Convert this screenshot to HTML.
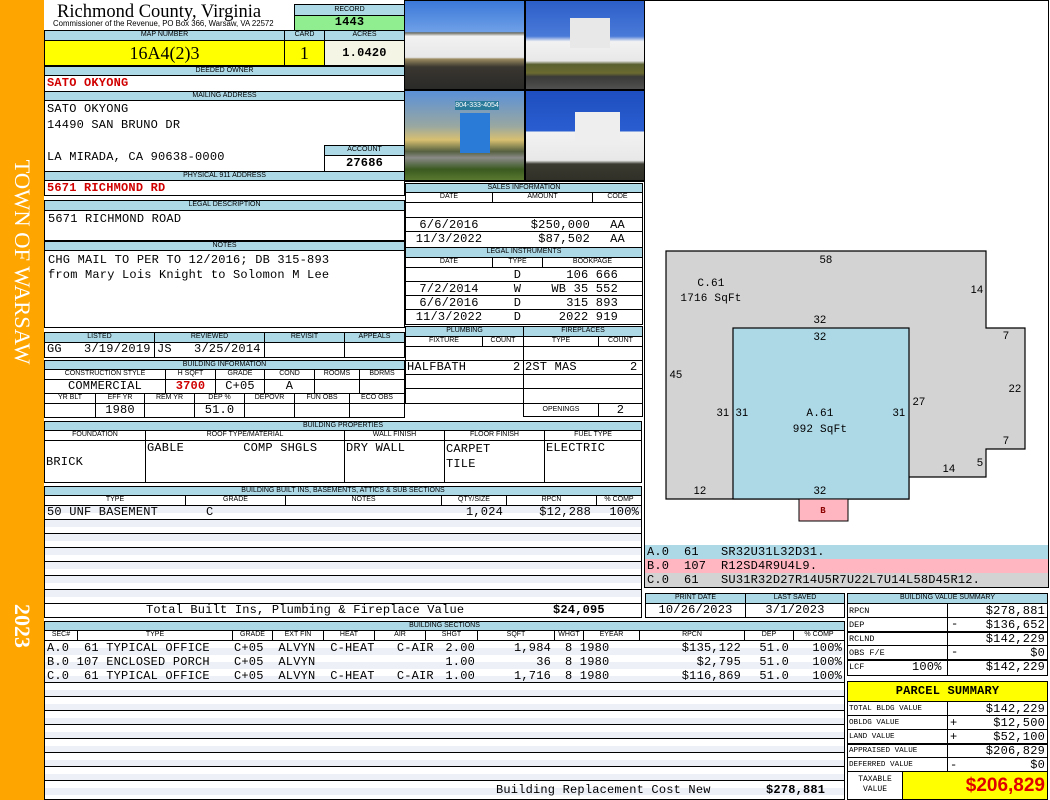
<!DOCTYPE html>
<html><head><meta charset="utf-8">
<style>
*{margin:0;padding:0;box-sizing:border-box}
body{width:1050px;height:800px;position:relative;background:#fff;overflow:hidden;font-family:"Liberation Mono",monospace;font-size:12px;letter-spacing:0.2px;color:#000}
div{position:absolute}
.b{border:1px solid #000;background:#fff}
.h{border:1px solid #000;background:#add8e6;font-family:"Liberation Sans",sans-serif;font-size:7px;letter-spacing:0;text-align:center;line-height:8px;overflow:hidden;white-space:nowrap}
.t{white-space:pre;line-height:13px}
.r{text-align:right}
.c{text-align:center}
.red{color:#d00000;font-weight:bold}
.s{font-family:"Liberation Sans",sans-serif;font-size:11px}
</style></head><body>
<!-- sidebar -->
<div style="left:0;top:0;width:44px;height:800px;background:#ffa500"></div>
<div style="left:22px;top:262px;width:0;height:0"><div style="left:-130px;top:-13px;width:260px;height:26px;transform:rotate(90deg);color:#fff;font-family:'Liberation Serif',serif;font-size:22.5px;letter-spacing:0;text-align:center;line-height:26px;white-space:nowrap">TOWN OF WARSAW</div></div>
<div style="left:22px;top:626px;width:0;height:0"><div style="left:-40px;top:-13px;width:80px;height:26px;transform:rotate(90deg);color:#fff;font-family:'Liberation Serif',serif;font-size:22px;letter-spacing:0;font-weight:bold;text-align:center;line-height:26px">2023</div></div>

<!-- header -->
<div style="left:57px;top:1px;font-family:'Liberation Serif',serif;font-size:18.5px;letter-spacing:0;line-height:22px;white-space:nowrap">Richmond County, Virginia</div>
<div style="left:53px;top:19px;font-family:'Liberation Sans',sans-serif;font-size:7.8px;letter-spacing:0;white-space:nowrap">Commissioner of the Revenue, PO Box 366, Warsaw, VA 22572</div>
<div class="h" style="left:294px;top:4px;width:111px;height:12px;line-height:10px">RECORD</div>
<div class="b t c" style="left:294px;top:15px;width:111px;height:16px;background:#90ee90;font-weight:bold">1443</div>
<div class="h" style="left:44px;top:30px;width:241px;height:11px">MAP NUMBER</div>
<div class="h" style="left:284px;top:30px;width:41px;height:11px">CARD</div>
<div class="h" style="left:324px;top:30px;width:81px;height:11px">ACRES</div>
<div class="b c" style="left:44px;top:40px;width:241px;height:26px;background:#ffff00;font-family:'Liberation Serif',serif;font-size:18px;letter-spacing:0;line-height:24px">16A4(2)3</div>
<div class="b c" style="left:284px;top:40px;width:41px;height:26px;background:#ffff00;font-family:'Liberation Serif',serif;font-size:18px;line-height:24px">1</div>
<div class="b c" style="left:324px;top:40px;width:81px;height:26px;background:#f5f5e6;font-weight:bold;line-height:24px">1.0420</div>

<div class="h" style="left:44px;top:66px;width:361px;height:10px">DEEDED OWNER</div>
<div class="b t red" style="left:44px;top:75px;width:361px;height:17px;padding-left:2px;line-height:15px">SATO OKYONG</div>
<div class="h" style="left:44px;top:91px;width:361px;height:10px">MAILING ADDRESS</div>
<div class="b" style="left:44px;top:100px;width:361px;height:72px"></div>
<div class="t" style="left:47px;top:101px;line-height:16px">SATO OKYONG
14490 SAN BRUNO DR

LA MIRADA, CA 90638-0000</div>
<div class="h" style="left:324px;top:145px;width:81px;height:11px">ACCOUNT</div>
<div class="b t c" style="left:324px;top:155px;width:81px;height:17px;font-weight:bold;line-height:15px">27686</div>
<div class="h" style="left:44px;top:171px;width:361px;height:10px">PHYSICAL 911 ADDRESS</div>
<div class="b t red" style="left:44px;top:180px;width:361px;height:16px;padding-left:2px;line-height:14px">5671 RICHMOND RD</div>

<div class="h" style="left:44px;top:200px;width:361px;height:11px">LEGAL DESCRIPTION</div>
<div class="b t" style="left:44px;top:210px;width:361px;height:31px;padding:2px 3px">5671 RICHMOND ROAD</div>
<div class="h" style="left:44px;top:241px;width:361px;height:10px">NOTES</div>
<div class="b t" style="left:44px;top:250px;width:361px;height:78px;padding:2px 3px;line-height:15px">CHG MAIL TO PER TO 12/2016; DB 315-893
from Mary Lois Knight to Solomon M Lee</div>

<div class="h" style="left:44px;top:332px;width:111px;height:11px">LISTED</div>
<div class="h" style="left:154px;top:332px;width:111px;height:11px">REVIEWED</div>
<div class="h" style="left:264px;top:332px;width:81px;height:11px">REVISIT</div>
<div class="h" style="left:344px;top:332px;width:61px;height:11px">APPEALS</div>
<div class="b t" style="left:44px;top:342px;width:111px;height:16px;padding-left:2px">GG   3/19/2019</div>
<div class="b t" style="left:154px;top:342px;width:111px;height:16px;padding-left:2px">JS   3/25/2014</div>
<div class="b" style="left:264px;top:342px;width:81px;height:16px"></div>
<div class="b" style="left:344px;top:342px;width:61px;height:16px"></div>

<div class="h" style="left:44px;top:360px;width:361px;height:10px">BUILDING INFORMATION</div>
<div class="h" style="left:44px;top:369px;width:122px;height:11px;background:#fff">CONSTRUCTION STYLE</div>
<div class="h" style="left:165px;top:369px;width:51px;height:11px;background:#fff">H SQFT</div>
<div class="h" style="left:215px;top:369px;width:50px;height:11px;background:#fff">GRADE</div>
<div class="h" style="left:264px;top:369px;width:51px;height:11px;background:#fff">COND</div>
<div class="h" style="left:314px;top:369px;width:46px;height:11px;background:#fff">ROOMS</div>
<div class="h" style="left:359px;top:369px;width:46px;height:11px;background:#fff">BDRMS</div>
<div class="b t c" style="left:44px;top:379px;width:122px;height:15px">COMMERCIAL</div>
<div class="b t c red" style="left:165px;top:379px;width:51px;height:15px">3700</div>
<div class="b t c" style="left:215px;top:379px;width:50px;height:15px">C+05</div>
<div class="b t c" style="left:264px;top:379px;width:51px;height:15px">A</div>
<div class="b" style="left:314px;top:379px;width:46px;height:15px"></div>
<div class="b" style="left:359px;top:379px;width:46px;height:15px"></div>
<div class="h" style="left:44px;top:393px;width:52px;height:11px;background:#fff">YR BLT</div>
<div class="h" style="left:95px;top:393px;width:50px;height:11px;background:#fff">EFF YR</div>
<div class="h" style="left:144px;top:393px;width:51px;height:11px;background:#fff">REM YR</div>
<div class="h" style="left:194px;top:393px;width:51px;height:11px;background:#fff">DEP %</div>
<div class="h" style="left:244px;top:393px;width:51px;height:11px;background:#fff">DEPOVR</div>
<div class="h" style="left:294px;top:393px;width:56px;height:11px;background:#fff">FUN OBS</div>
<div class="h" style="left:349px;top:393px;width:56px;height:11px;background:#fff">ECO OBS</div>
<div class="b" style="left:44px;top:403px;width:52px;height:15px"></div>
<div class="b t c" style="left:95px;top:403px;width:50px;height:15px">1980</div>
<div class="b" style="left:144px;top:403px;width:51px;height:15px"></div>
<div class="b t c" style="left:194px;top:403px;width:51px;height:15px">51.0</div>
<div class="b" style="left:244px;top:403px;width:51px;height:15px"></div>
<div class="b" style="left:294px;top:403px;width:56px;height:15px"></div>
<div class="b" style="left:349px;top:403px;width:56px;height:15px"></div>

<!-- building properties -->
<div class="h" style="left:44px;top:421px;width:598px;height:10px">BUILDING PROPERTIES</div>
<div class="h" style="left:44px;top:430px;width:102px;height:11px;background:#fff">FOUNDATION</div>
<div class="h" style="left:145px;top:430px;width:200px;height:11px;background:#fff">ROOF TYPE/MATERIAL</div>
<div class="h" style="left:344px;top:430px;width:101px;height:11px;background:#fff">WALL FINISH</div>
<div class="h" style="left:444px;top:430px;width:101px;height:11px;background:#fff">FLOOR FINISH</div>
<div class="h" style="left:544px;top:430px;width:98px;height:11px;background:#fff">FUEL TYPE</div>
<div class="b t" style="left:44px;top:440px;width:102px;height:43px;padding:15px 1px 0">BRICK</div>
<div class="b t" style="left:145px;top:440px;width:200px;height:43px;padding:1px">GABLE        COMP SHGLS</div>
<div class="b t" style="left:344px;top:440px;width:101px;height:43px;padding:1px">DRY WALL</div>
<div class="b t" style="left:444px;top:440px;width:101px;height:43px;padding:1px;line-height:15px">CARPET
TILE</div>
<div class="b t" style="left:544px;top:440px;width:98px;height:43px;padding:1px">ELECTRIC</div>

<!-- built ins -->
<div class="h" style="left:44px;top:486px;width:598px;height:10px">BUILDING BUILT INS, BASEMENTS, ATTICS &amp; SUB SECTIONS</div>
<div class="h" style="left:44px;top:495px;width:142px;height:11px;background:#fff">TYPE</div>
<div class="h" style="left:185px;top:495px;width:101px;height:11px;background:#fff">GRADE</div>
<div class="h" style="left:285px;top:495px;width:157px;height:11px;background:#fff">NOTES</div>
<div class="h" style="left:441px;top:495px;width:66px;height:11px;background:#fff">QTY/SIZE</div>
<div class="h" style="left:506px;top:495px;width:91px;height:11px;background:#fff">RPCN</div>
<div class="h" style="left:596px;top:495px;width:46px;height:11px;background:#fff">% COMP</div>
<div class="b" style="left:44px;top:505px;width:598px;height:99px;background:repeating-linear-gradient(#eef0f8 0 7px,#fff 7px 14px)"></div>
<div style="left:44px;top:519px;width:598px;border-top:1px solid #000"></div>
<div style="left:44px;top:533px;width:598px;border-top:1px solid #000"></div>
<div style="left:44px;top:547px;width:598px;border-top:1px solid #000"></div>
<div style="left:44px;top:561px;width:598px;border-top:1px solid #000"></div>
<div style="left:44px;top:575px;width:598px;border-top:1px solid #000"></div>
<div style="left:44px;top:589px;width:598px;border-top:1px solid #000"></div>
<div class="t" style="left:47px;top:506px">50 UNF BASEMENT</div>
<div class="t" style="left:206px;top:506px">C</div>
<div class="t r" style="left:441px;top:506px;width:62px">1,024</div>
<div class="t r" style="left:506px;top:506px;width:85px">$12,288</div>
<div class="t r" style="left:596px;top:506px;width:43px">100%</div>
<div class="b t" style="left:44px;top:603px;width:598px;height:15px"></div>
<div class="t" style="left:146px;top:604px">Total Built Ins, Plumbing &amp; Fireplace Value</div>
<div class="t" style="left:553px;top:604px;font-weight:bold">$24,095</div>

<!-- building sections -->
<div class="h" style="left:44px;top:621px;width:801px;height:10px">BUILDING SECTIONS</div>
<div class="h" style="left:44px;top:630px;width:34px;height:11px;background:#fff">SEC#</div>
<div class="h" style="left:77px;top:630px;width:156px;height:11px;background:#fff">TYPE</div>
<div class="h" style="left:232px;top:630px;width:41px;height:11px;background:#fff">GRADE</div>
<div class="h" style="left:272px;top:630px;width:52px;height:11px;background:#fff">EXT FIN</div>
<div class="h" style="left:323px;top:630px;width:52px;height:11px;background:#fff">HEAT</div>
<div class="h" style="left:374px;top:630px;width:52px;height:11px;background:#fff">AIR</div>
<div class="h" style="left:425px;top:630px;width:53px;height:11px;background:#fff">SHGT</div>
<div class="h" style="left:477px;top:630px;width:78px;height:11px;background:#fff">SQFT</div>
<div class="h" style="left:554px;top:630px;width:30px;height:11px;background:#fff">WHGT</div>
<div class="h" style="left:583px;top:630px;width:57px;height:11px;background:#fff">EYEAR</div>
<div class="h" style="left:639px;top:630px;width:106px;height:11px;background:#fff">RPCN</div>
<div class="h" style="left:744px;top:630px;width:50px;height:11px;background:#fff">DEP</div>
<div class="h" style="left:793px;top:630px;width:52px;height:11px;background:#fff">% COMP</div>
<div class="b" style="left:44px;top:640px;width:801px;height:160px;background:repeating-linear-gradient(#fff 0 7px,#eef0f8 7px 14px)"></div>
<div style="left:44px;top:682px;width:801px;border-top:1px solid #000"></div>
<div style="left:44px;top:696px;width:801px;border-top:1px solid #000"></div>
<div style="left:44px;top:710px;width:801px;border-top:1px solid #000"></div>
<div style="left:44px;top:724px;width:801px;border-top:1px solid #000"></div>
<div style="left:44px;top:738px;width:801px;border-top:1px solid #000"></div>
<div style="left:44px;top:752px;width:801px;border-top:1px solid #000"></div>
<div style="left:44px;top:766px;width:801px;border-top:1px solid #000"></div>
<div style="left:44px;top:780px;width:801px;border-top:1px solid #000"></div>
<div class="t" style="left:47px;top:641px;line-height:14px">A.0  61 TYPICAL OFFICE
B.0 107 ENCLOSED PORCH
C.0  61 TYPICAL OFFICE</div>
<div class="t" style="left:234px;top:641px;line-height:14px">C+05  ALVYN  C-HEAT   C-AIR
C+05  ALVYN
C+05  ALVYN  C-HEAT   C-AIR</div>
<div class="t r" style="left:425px;top:641px;width:50px;line-height:14px">2.00
1.00
1.00</div>
<div class="t r" style="left:477px;top:641px;width:74px;line-height:14px">1,984
36
1,716</div>
<div class="t" style="left:565px;top:641px;line-height:14px">8 1980
8 1980
8 1980</div>
<div class="t r" style="left:639px;top:641px;width:102px;line-height:14px">$135,122
$2,795
$116,869</div>
<div class="t r" style="left:744px;top:641px;width:45px;line-height:14px">51.0
51.0
51.0</div>
<div class="t r" style="left:793px;top:641px;width:49px;line-height:14px">100%
100%
100%</div>
<div class="t" style="left:496px;top:784px">Building Replacement Cost New</div>
<div class="t" style="left:766px;top:784px;font-weight:bold">$278,881</div>

<!-- photos -->
<div style="left:404px;top:0;width:241px;height:182px;background:#000"></div>
<div style="left:405px;top:1px;width:119px;height:88px;background:linear-gradient(#3a78d8 0,#6fa0e8 35%,#6a6a60 36%,#f2f2f2 40%,#e8e8e8 64%,#9a8a60 66%,#3a3630 75%,#2a2a28 100%)"></div>
<div style="left:526px;top:1px;width:118px;height:88px;background:linear-gradient(#2c5ec8 0,#4a7ad8 40%,#f2f2f2 46%,#e8e8e8 68%,#5a6030 72%,#6a6a30 82%,#3a3a38 86%,#505050 100%)"></div>
<div style="left:570px;top:18px;width:40px;height:30px;background:#e8e8e8"></div>
<div style="left:405px;top:91px;width:119px;height:89px;background:linear-gradient(#5a90d8 0,#9aa8a0 40%,#d8c070 55%,#556040 68%,#8a8a88 75%,#3a5a20 88%,#5a7a30 100%)"></div>
<div style="left:455px;top:101px;width:44px;height:9px;background:#2a7a9a;color:#fff;font-family:'Liberation Sans',sans-serif;font-size:7px;letter-spacing:0;line-height:9px;text-align:center">804-333-4054</div>
<div style="left:460px;top:113px;width:30px;height:40px;background:#2a7ad8"></div>
<div style="left:526px;top:91px;width:118px;height:89px;background:linear-gradient(#1e4ec0 0,#2a5ed0 45%,#f2f2f2 46%,#e8e8e8 78%,#3a3a30 82%,#303028 100%)"></div>
<div style="left:575px;top:112px;width:45px;height:30px;background:#eeeeee"></div>

<!-- sketch area -->
<div class="b" style="left:644px;top:0;width:405px;height:546px"></div>
<svg style="position:absolute;left:0;top:0" width="1050" height="800">
<polygon points="666,251 986,251 986,328 1025,328 1025,449 986,449 986,477 909,477 909,499 666,499" fill="#d3d3d3" stroke="#000" stroke-width="1.2"/>
<rect x="733" y="328" width="176" height="171" fill="#add8e6" stroke="#000" stroke-width="1.2"/>
<rect x="799" y="499" width="49" height="22" fill="#ffb6c1" stroke="#000" stroke-width="1"/>
<g font-family="Liberation Sans,sans-serif" font-size="11" text-anchor="middle">
<text x="826" y="263">58</text><text x="977" y="293">14</text><text x="1006" y="339">7</text><text x="1015" y="392">22</text><text x="1006" y="444">7</text><text x="980" y="466">5</text><text x="949" y="472">14</text><text x="919" y="405">27</text><text x="820" y="323">32</text><text x="820" y="340">32</text><text x="676" y="378">45</text><text x="723" y="416">31</text><text x="742" y="416">31</text><text x="899" y="416">31</text><text x="700" y="494">12</text><text x="820" y="494">32</text>
</g>
<g font-family="Liberation Mono,monospace" font-size="11" text-anchor="middle">
<text x="711" y="286">C.61</text><text x="711" y="301">1716 SqFt</text><text x="820" y="416">A.61</text><text x="820" y="432">992 SqFt</text>
<text x="823" y="513" font-size="9" fill="#8b0000" font-weight="bold">B</text>
</g>
</svg>
<div class="b t" style="left:644px;top:545px;width:405px;height:43px;background:#d3d3d3"></div>
<div class="t" style="left:645px;top:545px;width:403px;height:14px;background:#add8e6;padding-left:2px;line-height:14px">A.0  61   SR32U31L32D31.</div>
<div class="t" style="left:645px;top:559px;width:403px;height:14px;background:#ffb6c1;padding-left:2px;line-height:14px">B.0  107  R12SD4R9U4L9.</div>
<div class="t" style="left:645px;top:573px;width:403px;height:14px;padding-left:2px;line-height:14px">C.0  61   SU31R32D27R14U5R7U22L7U14L58D45R12.</div>

<!-- sales info -->
<div class="h" style="left:405px;top:183px;width:238px;height:10px">SALES INFORMATION</div>
<div class="h" style="left:405px;top:192px;width:88px;height:11px;background:#fff">DATE</div>
<div class="h" style="left:492px;top:192px;width:101px;height:11px;background:#fff">AMOUNT</div>
<div class="h" style="left:592px;top:192px;width:51px;height:11px;background:#fff">CODE</div>
<div class="b" style="left:405px;top:202px;width:238px;height:46px"></div>
<div style="left:405px;top:217px;width:238px;border-top:1px solid #000"></div>
<div style="left:405px;top:231px;width:238px;border-top:1px solid #000"></div>
<div class="t c" style="left:405px;top:218px;width:88px;line-height:14px">6/6/2016
11/3/2022</div>
<div class="t r" style="left:492px;top:218px;width:98px;line-height:14px">$250,000
$87,502</div>
<div class="t c" style="left:592px;top:218px;width:51px;line-height:14px">AA
AA</div>
<div class="h" style="left:405px;top:247px;width:238px;height:11px">LEGAL INSTRUMENTS</div>
<div class="h" style="left:405px;top:257px;width:88px;height:11px;background:#fff">DATE</div>
<div class="h" style="left:492px;top:257px;width:51px;height:11px;background:#fff">TYPE</div>
<div class="h" style="left:542px;top:257px;width:101px;height:11px;background:#fff">BOOKPAGE</div>
<div class="b" style="left:405px;top:267px;width:238px;height:58px"></div>
<div style="left:405px;top:281px;width:238px;border-top:1px solid #000"></div>
<div style="left:405px;top:295px;width:238px;border-top:1px solid #000"></div>
<div style="left:405px;top:309px;width:238px;border-top:1px solid #000"></div>
<div class="t c" style="left:405px;top:268px;width:88px;line-height:14px">
7/2/2014
6/6/2016
11/3/2022</div>
<div class="t c" style="left:492px;top:268px;width:51px;line-height:14px">D
W
D
D</div>
<div class="t r" style="left:542px;top:268px;width:76px;line-height:14px">106 666
WB 35 552
315 893
2022 919</div>
<div class="h" style="left:405px;top:326px;width:119px;height:11px">PLUMBING</div>
<div class="h" style="left:523px;top:326px;width:120px;height:11px">FIREPLACES</div>
<div class="h" style="left:405px;top:336px;width:78px;height:11px;background:#fff">FIXTURE</div>
<div class="h" style="left:482px;top:336px;width:42px;height:11px;background:#fff">COUNT</div>
<div class="h" style="left:523px;top:336px;width:76px;height:11px;background:#fff">TYPE</div>
<div class="h" style="left:598px;top:336px;width:45px;height:11px;background:#fff">COUNT</div>
<div class="b" style="left:405px;top:346px;width:119px;height:58px"></div>
<div class="b" style="left:523px;top:346px;width:120px;height:58px"></div>
<div style="left:405px;top:360px;width:238px;border-top:1px solid #000"></div>
<div style="left:405px;top:374px;width:238px;border-top:1px solid #000"></div>
<div style="left:405px;top:388px;width:238px;border-top:1px solid #000"></div>
<div class="t" style="left:407px;top:361px">HALFBATH</div>
<div class="t" style="left:513px;top:361px">2</div>
<div class="t" style="left:525px;top:361px">2ST MAS</div>
<div class="t" style="left:630px;top:361px">2</div>
<div class="b s c" style="left:523px;top:403px;width:76px;height:14px;font-size:7px;letter-spacing:0;line-height:12px">OPENINGS</div>
<div class="b t c" style="left:598px;top:403px;width:45px;height:14px;line-height:12px">2</div>

<!-- print date -->
<div class="h" style="left:645px;top:593px;width:101px;height:11px">PRINT DATE</div>
<div class="h" style="left:745px;top:593px;width:100px;height:11px">LAST SAVED</div>
<div class="b t c" style="left:645px;top:603px;width:101px;height:15px">10/26/2023</div>
<div class="b t c" style="left:745px;top:603px;width:100px;height:15px">3/1/2023</div>

<!-- building value summary -->
<div class="h" style="left:847px;top:593px;width:201px;height:11px">BUILDING VALUE SUMMARY</div>
<div class="b" style="left:847px;top:603px;width:201px;height:73px"></div>
<div style="left:947px;top:603px;height:73px;border-left:1px solid #000"></div>
<div style="left:847px;top:617px;width:201px;border-top:1px solid #000"></div>
<div style="left:847px;top:631px;width:201px;border-top:2px solid #000"></div>
<div style="left:847px;top:645px;width:201px;border-top:1px solid #000"></div>
<div style="left:847px;top:659px;width:201px;border-top:2px solid #000"></div>
<div class="t" style="left:849px;top:604px;font-size:8.5px;letter-spacing:0;line-height:14px">RPCN
DEP
RCLND
OBS F/E
LCF</div>
<div class="t" style="left:912px;top:660px;line-height:14px">100%</div>
<div class="t" style="left:951px;top:618px;line-height:13px">-</div>
<div class="t" style="left:951px;top:646px;line-height:13px">-</div>
<div class="t r" style="left:947px;top:604px;width:98px;line-height:14px">$278,881
$136,652
$142,229
$0
$142,229</div>

<!-- parcel summary -->
<div class="b c" style="left:847px;top:681px;width:201px;height:21px;background:#ffff00;font-weight:bold;line-height:19px">PARCEL SUMMARY</div>
<div class="b" style="left:847px;top:701px;width:201px;height:71px"></div>
<div style="left:847px;top:715px;width:201px;border-top:1px solid #000"></div>
<div style="left:847px;top:729px;width:201px;border-top:1px solid #000"></div>
<div style="left:847px;top:743px;width:201px;border-top:2px solid #000"></div>
<div style="left:847px;top:757px;width:201px;border-top:1px solid #000"></div>
<div style="left:947px;top:701px;height:71px;border-left:1px solid #000"></div>
<div class="t" style="left:849px;top:702px;font-size:7.6px;letter-spacing:0;line-height:14px">TOTAL BLDG VALUE
OBLDG VALUE
LAND VALUE
APPRAISED VALUE
DEFERRED VALUE</div>
<div class="t" style="left:950px;top:702px;line-height:14px">
+
+

-</div>
<div class="t r" style="left:947px;top:702px;width:98px;line-height:14px">$142,229
$12,500
$52,100
$206,829
$0</div>
<div class="b" style="left:847px;top:771px;width:56px;height:29px;font-size:8px;letter-spacing:0;text-align:center;line-height:10px;padding-top:3px">TAXABLE<br>VALUE</div>
<div class="b" style="left:902px;top:771px;width:146px;height:29px;background:#ffff00;color:#e00000;font-family:'Liberation Sans',sans-serif;letter-spacing:0;font-weight:bold;font-size:19px;text-align:right;padding-right:2px;line-height:27px">$206,829</div>
</body></html>
